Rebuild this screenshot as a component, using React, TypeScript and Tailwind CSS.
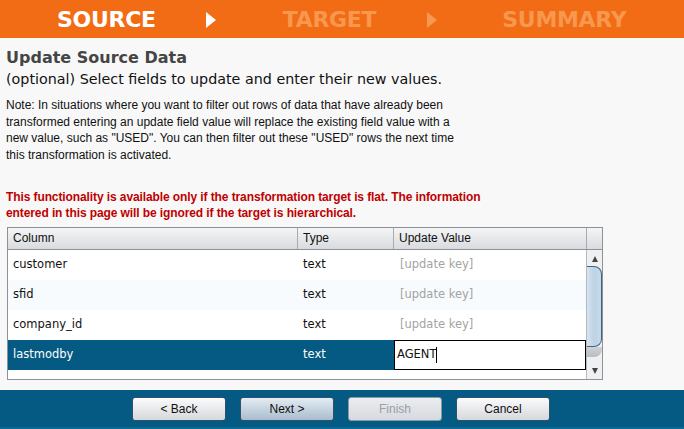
import React from 'react'

type Row = { name: string; type: string; value: string; selected?: boolean }

const rows: Row[] = [
  { name: 'customer', type: 'text', value: '' },
  { name: 'sfid', type: 'text', value: '' },
  { name: 'company_id', type: 'text', value: '' },
  { name: 'lastmodby', type: 'text', value: 'AGENT', selected: true },
]

function StepArrow({ faded }: { faded?: boolean }) {
  return (
    <svg width="10" height="16" viewBox="0 0 10 16" className="shrink-0">
      <polygon points="0,0 10,8 0,16" fill={faded ? '#f8984f' : '#ffffff'} />
    </svg>
  )
}

function WizardButton({ label, variant }: { label: string; variant?: 'primary' | 'disabled' }) {
  const cls =
    variant === 'primary'
      ? 'bg-gradient-to-b from-[#e4ecf3] to-[#a9bccd] text-[#111] border-[#33506a]'
      : variant === 'disabled'
        ? 'bg-gradient-to-b from-[#ebedf0] to-[#d6d9de] text-[#9aa0a6] border-[#8c9aa6]'
        : 'bg-gradient-to-b from-[#fbfbfc] to-[#d5d8dc] text-[#111] border-[#33506a]'
  return (
    <button
      className={`w-[94px] h-[24px] rounded-[3px] border text-[12px] font-['Liberation_Sans',sans-serif] ${cls}`}
    >
      {label}
    </button>
  )
}

export default function App() {
  return (
    <div className="w-[684px] h-[429px] bg-[#f8f8f8] flex flex-col overflow-hidden">
      {/* Steps */}
      <div className="h-[38px] bg-[#f26c15] flex items-center pl-[57px] pt-[2px] font-['DejaVu_Sans',sans-serif] font-bold text-[22px] tracking-[-0.3px] leading-none">
        <span className="text-white">SOURCE</span>
        <span className="ml-[50px]"><StepArrow /></span>
        <span className="ml-[67px] text-[#f8984f]">TARGET</span>
        <span className="ml-[51px]"><StepArrow faded /></span>
        <span className="ml-[65px] text-[#f8984f]">SUMMARY</span>
      </div>

      <div className="px-[6px] flex flex-col">
        <h1 className="mt-[10px] text-[16px] leading-[20px] font-bold text-[#454545] font-['DejaVu_Sans',sans-serif]">
          Update Source Data
        </h1>
        <p className="mt-[2px] text-[14.3px] leading-[18px] text-[#111] font-['DejaVu_Sans',sans-serif]">
          (optional) Select fields to update and enter their new values.
        </p>
        <p className="mt-[9px] w-[462px] text-[12px] leading-[16.7px] text-[#111] font-['Liberation_Sans',sans-serif]">
          Note: In situations where you want to filter out rows of data that have already been
          transformed entering an update field value will replace the existing field value with a
          new value, such as "USED". You can then filter out these "USED" rows the next time
          this transformation is activated.
        </p>
        <p className="mt-[25px] w-[482px] text-[12px] leading-[16px] font-bold tracking-[-0.1px] text-[#c00000] font-['Liberation_Sans',sans-serif]">
          This functionality is available only if the transformation target is flat. The information
          entered in this page will be ignored if the target is hierarchical.
        </p>

        {/* Table */}
        <div className="mt-[6px] ml-px w-[596px] h-[153px] border border-[#8e9197] bg-white flex flex-col font-['Liberation_Sans',sans-serif]">
          <div className="h-[22px] flex border-b border-[#8e9197] bg-gradient-to-b from-[#f4f5f6] to-[#d9dbdf] text-[12px] text-[#111]">
            <div className="w-[290px] pl-[5px] flex items-center border-r border-[#a8abb0]">Column</div>
            <div className="w-[96px] pl-[5px] flex items-center border-r border-[#a8abb0]">Type</div>
            <div className="w-[193px] pl-[5px] flex items-center border-r border-[#a8abb0]">Update Value</div>
            <div className="flex-1" />
          </div>
          <div className="flex-1 flex min-h-0">
            <div className="flex-1 flex flex-col font-['DejaVu_Sans',sans-serif] text-[11.5px]">
              {rows.map((r, i) => (
                <div
                  key={r.name}
                  className={`h-[30px] flex items-center ${
                    r.selected ? 'bg-[#045a82] text-white' : i % 2 === 1 ? 'bg-[#f7fbfd] text-[#111]' : 'bg-white text-[#111]'
                  }`}
                >
                  <div className="w-[290px] pl-[5px]">{r.name}</div>
                  <div className="w-[96px] pl-[5px]">{r.type}</div>
                  {r.selected ? (
                    <div className="flex-1 h-full bg-white border border-black flex items-center pl-[2px] text-[#111]">
                      {r.value}
                      <span className="w-px h-[16px] bg-black" />
                    </div>
                  ) : (
                    <div className="flex-1 pl-[6px] text-[#a3a3a3]">[update key]</div>
                  )}
                </div>
              ))}
            </div>
            {/* Scrollbar */}
            <div className="w-[16px] border-l border-[#b5b8bc] bg-[#eef0f2] flex flex-col items-center">
              <svg width="8" height="8" viewBox="0 0 8 8" className="mt-[5px]">
                <polygon points="4,1 7,7 1,7" fill="#444" />
              </svg>
              <div className="mt-[3px] w-[15px] h-[81px] rounded-r-[8px] border border-l-0 border-[#45627c] bg-gradient-to-r from-[#d6e4ef] via-[#bcd2e6] to-[#c8daea]" />
              <div className="w-[15px] h-[10px] rounded-br-[8px] bg-gradient-to-b from-[#cfd2d6] to-[#b8bcc1]" />
              <div className="flex-1" />
              <svg width="8" height="8" viewBox="0 0 8 8" className="mb-[4px]">
                <polygon points="1,1 7,1 4,7" fill="#444" />
              </svg>
            </div>
          </div>
        </div>
      </div>

      <div className="flex-1" />
      {/* Footer */}
      <div className="h-[39px] bg-[#045a82] border-b-2 border-[#0a6a94] flex items-start pt-[7px] pl-[132px] gap-[14px]">
        <WizardButton label="< Back" />
        <WizardButton label="Next >" variant="primary" />
        <WizardButton label="Finish" variant="disabled" />
        <WizardButton label="Cancel" />
      </div>
    </div>
  )
}
